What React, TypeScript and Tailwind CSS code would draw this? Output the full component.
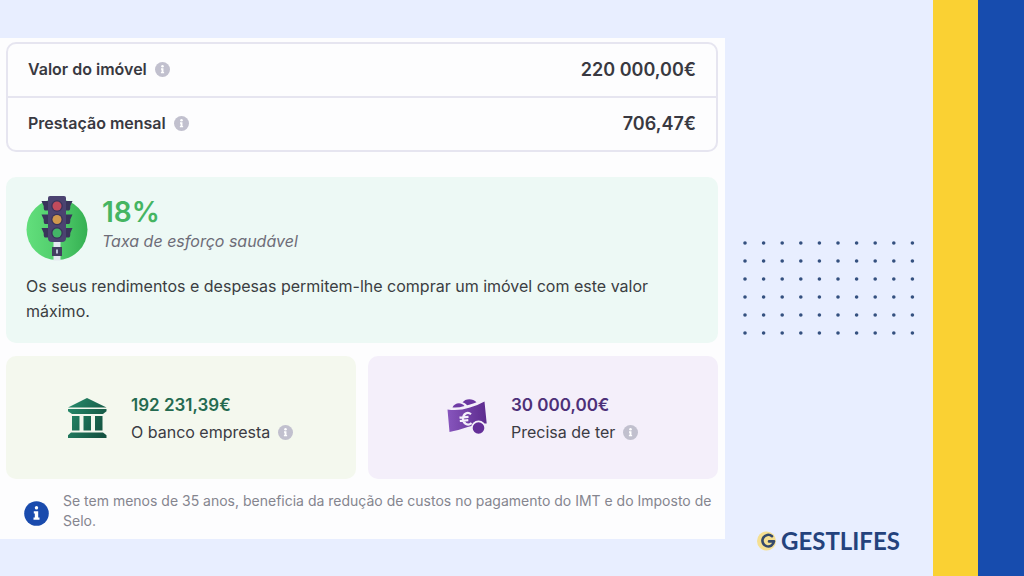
const rows = [
  { label: "Valor do imóvel", value: "220 000,00€" },
  { label: "Prestação mensal", value: "706,47€" },
];

const dotColumns = Array.from({ length: 10 }, (_, i) => i);
const dotRows = Array.from({ length: 6 }, (_, i) => i);

function InfoButton({ label }: { label: string }) {
  return (
    <button type="button" aria-label={`Mais informação: ${label}`} className="shrink-0 text-[#c1c0ce]">
      <svg width="15" height="15" viewBox="0 0 14 14" className="block">
        <circle cx="7" cy="7" r="7" fill="currentColor" />
        <circle cx="7" cy="3.9" r="1.2" fill="#fff" />
        <path d="M5.600 5.900h2.300v3.400h.6v1.300H5.500V9.300h.6V7.200h-.5z" fill="#fff" />
      </svg>
    </button>
  );
}

function TrafficLight() {
  return (
    <svg width="62" height="66" viewBox="0 0 62 66" className="shrink-0" aria-hidden="true">
      <defs>
        <linearGradient id="light-disc" x1="0" y1="0" x2="1" y2="0">
          <stop offset="0" stopColor="#62df7c" />
          <stop offset="0.55" stopColor="#4fcb6a" />
          <stop offset="1" stopColor="#35b052" />
        </linearGradient>
      </defs>
      <circle cx="31" cy="34.5" r="30.5" fill="url(#light-disc)" />
      <path d="M27.500 46h7v19.500h-7z" fill="#e3e8ef" />
      <path d="M26 52h10v9H26z" fill="#433e60" />
      <path d="M30 54.500h2v4h-2z" fill="#b9bfd4" />
      <path
        d="M15.500 6H23v9.500h-3.500c-1.500 0-1.800-1-1.800-4.500zM46.500 6H39v9.500h3.500c1.500 0 1.800-1 1.800-4.500zM15.500 19.500H23V29h-3.500c-1.500 0-1.800-1-1.800-4.500zM46.500 19.500H39V29h3.500c1.500 0 1.800-1 1.800-4.500zM15.500 33H23v9.500h-3.500c-1.500 0-1.800-1-1.800-4.500zM46.500 33H39v9.500h3.500c1.500 0 1.800-1 1.800-4.500z"
        fill="#39345a"
      />
      <path d="M24 1h14a2 2 0 0 1 2 2v40a4 4 0 0 1-4 4H26a4 4 0 0 1-4-4V3a2 2 0 0 1 2-2z" fill="#4b4370" />
      <circle cx="31" cy="11" r="5.800" fill="#39345a" />
      <circle cx="31" cy="24.500" r="5.800" fill="#39345a" />
      <circle cx="31" cy="38" r="5.800" fill="#39345a" />
      <circle cx="31" cy="11" r="4.500" fill="#c14b5c" />
      <circle cx="31" cy="24.500" r="4.500" fill="#cf984d" />
      <circle cx="31" cy="38" r="4.500" fill="#43b567" />
    </svg>
  );
}

function BankIcon() {
  return (
    <svg width="40" height="42" viewBox="0 0 40 42" className="shrink-0" aria-hidden="true">
      <defs>
        <linearGradient id="bank-fill" gradientUnits="userSpaceOnUse" x1="0" y1="10" x2="40" y2="30">
          <stop offset="0" stopColor="#26896a" />
          <stop offset="1" stopColor="#145240" />
        </linearGradient>
      </defs>
      <g fill="url(#bank-fill)">
        <path d="M20 1L39.500 10.500H1z" />
        <path d="M1 12h38.500v2.300L36 17H5l-4-2.700z" />
        <path d="M5 19h7.500v14.500H5zM16.500 19H24v14.500h-7.500zM28 19h7.500v14.500H28z" />
        <path d="M4 35.500h32l3.500 2.700V41H1v-2.800z" />
      </g>
    </svg>
  );
}

function MoneyIcon() {
  return (
    <svg width="40" height="37" viewBox="0 0 40 37" className="shrink-0" aria-hidden="true">
      <defs>
        <linearGradient id="money-fill" x1="0" y1="0" x2="1" y2="0">
          <stop offset="0" stopColor="#8755bd" />
          <stop offset="1" stopColor="#5d2b8e" />
        </linearGradient>
      </defs>
      <path d="M5.500 8.500c1.500-4.500 8.500-6 12-1.500-4 1.300-8 1.800-12 1.500z" fill="#6f3ba5" />
      <path d="M15.500 3.500C18-.8 26-1 29.500 3.300c-3.500 1.200-6.500 2.300-9.500 3-1-1.600-2.500-2.500-4.500-2.800z" fill="#6a36a0" />
      <path d="M.5 10.500C14 12.500 26 8.500 37.500 2.500l2.200 22C29 24 14 31 2.500 33z" fill="url(#money-fill)" />
      <path
        d="M24 15.200c-3.300-3-8-.6-8 4.600s5 7.400 8.600 4.300M12.500 18.600l9-.8M12.800 22l8.500-.8"
        fill="none"
        stroke="#f4effa"
        strokeWidth="2.200"
      />
      <circle cx="31.500" cy="29" r="7.500" fill="#f4effa" />
      <circle cx="31.500" cy="29" r="5.800" fill="#642f98" />
    </svg>
  );
}

const amounts = [
  {
    label: "O banco empresta",
    value: "192 231,39€",
    icon: <BankIcon />,
    card: "bg-[#f4f8ee] pl-[61px]",
    color: "text-[#246a50]",
  },
  {
    label: "Precisa de ter",
    value: "30 000,00€",
    icon: <MoneyIcon />,
    card: "bg-[#f4effa] pl-[79px]",
    color: "text-[#4d3078]",
  },
];

function Results() {
  return (
    <section className="min-w-0 flex-1 bg-[#fdfdfe] pt-1 pr-[7px] pb-2 pl-1.5">
      <dl className="divide-y-2 divide-[#e6e5f0] rounded-[10px] border-2 border-[#e6e5f0] font-semibold text-[#393941]">
        {rows.map((row) => (
          <div key={row.label} className="flex h-[54px] items-center justify-between px-5 pb-0.5 last:h-[52px]">
            <dt className="flex items-center gap-2 text-[16px]">
              {row.label}
              <InfoButton label={row.label} />
            </dt>
            <dd className="text-[18px]">{row.value}</dd>
          </div>
        ))}
      </dl>

      <div className="mt-[25px] rounded-[10px] bg-[#edf9f5] px-5 pt-[18px] pb-[19px]">
        <div className="flex gap-3.5">
          <TrafficLight />
          <div>
            <p className="text-[28px] leading-[34px] font-semibold text-[#45b562]">18%</p>
            <p className="text-[16px] leading-6 text-[#6d6d78] italic">Taxa de esforço saudável</p>
          </div>
        </div>
        <p className="mt-[13px] text-[16px] leading-[25px] text-[#3b3e42]">
          Os seus rendimentos e despesas permitem-lhe comprar um imóvel com este valor máximo.
        </p>
      </div>

      <div className="mt-[13px] grid grid-cols-2 gap-3">
        {amounts.map((item) => (
          <div key={item.label} className={`flex h-[123px] items-center gap-6 rounded-[10px] ${item.card}`}>
            {item.icon}
            <div className="pt-0.5">
              <p className={`text-[17px] leading-[27px] font-semibold ${item.color}`}>{item.value}</p>
              <p className="flex items-center gap-2 text-[16px] leading-[27px] whitespace-nowrap text-[#3b3b43]">
                {item.label}
                <InfoButton label={item.label} />
              </p>
            </div>
          </div>
        ))}
      </div>

      <div className="mt-3 flex items-center gap-3.5 pl-[18px]">
        <div className="shrink-0 pt-1">
          <svg width="25" height="25" viewBox="0 0 25 25" className="block" aria-hidden="true">
            <circle cx="12.500" cy="12.500" r="12.300" fill="#1a4bad" />
            <circle cx="12.500" cy="6.800" r="1.700" fill="#fff" />
            <path d="M9.800 10.300h4.400v6.200h1.300v2.300H9.500v-2.300h1.300v-3.900h-1z" fill="#fff" />
          </svg>
        </div>
        <p className="text-[14px] leading-5 text-[#85858f]">
          Se tem menos de 35 anos, beneficia da redução de custos no pagamento do IMT e do Imposto de Selo.
        </p>
      </div>
    </section>
  );
}

function Brand() {
  return (
    <div className="flex items-center gap-1 text-[#24427c]">
      <svg width="20" height="20" viewBox="0 0 20 20" aria-hidden="true">
        <circle cx="9.500" cy="10" r="9.500" fill="#f5df91" />
        <path
          d="M15 5.200A5.800 5.800 0 1 0 17 10.400H12"
          fill="none"
          stroke="#34496b"
          strokeWidth="2.600"
          strokeLinecap="round"
          strokeLinejoin="round"
        />
      </svg>
      <span className="font-['Lato',sans-serif] text-[24px] leading-6 font-bold">GESTLIFES</span>
    </div>
  );
}

export default function App() {
  return (
    <div className="flex min-h-screen bg-[#e8eeff] font-[Inter,sans-serif]">
      <main className="flex flex-1 items-start pt-[38px]">
        <Results />
        <aside className="flex w-[208px] shrink-0 flex-col gap-[193px] pt-[202px] pl-4">
          <svg width="174" height="96" viewBox="0 0 174 96" aria-hidden="true">
            {dotRows.map((row) =>
              dotColumns.map((col) => (
                <circle key={`${row}-${col}`} cx={4 + col * 18.6} cy={3 + row * 18} r="1.800" fill="#34507f" />
              )),
            )}
          </svg>
          <div className="pl-4">
            <Brand />
          </div>
        </aside>
      </main>
      <div className="w-[45px] shrink-0 bg-[#fad133]" />
      <div className="w-[46px] shrink-0 bg-[#174cae]" />
    </div>
  );
}
